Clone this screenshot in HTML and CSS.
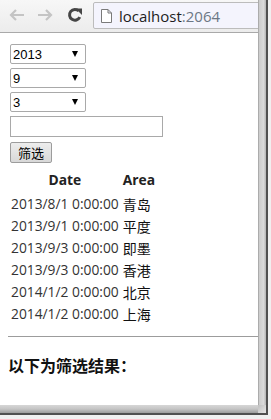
FILE: index.html
```html
<!DOCTYPE html>
<html lang="zh-CN">
<head>
    <meta charset="UTF-8">
    <meta name="viewport" content="width=device-width, initial-scale=1.0">
    <title>筛选</title>
    <link rel="stylesheet" href="styles.css">
</head>
<body>
    <div class="shot">
        <div class="window">
            <div class="toolbar">
                <span class="nav">
                    <svg width="16" height="14" viewBox="0 0 16 14"><path d="M15 7H2M7 2L2 7l5 5" fill="none" stroke="#c4c4c4" stroke-width="2.2"/></svg>
                </span>
                <span class="nav">
                    <svg width="16" height="14" viewBox="0 0 16 14"><path d="M1 7h13M9 2l5 5-5 5" fill="none" stroke="#c4c4c4" stroke-width="2.2"/></svg>
                </span>
                <span class="nav reload">
                    <svg width="16" height="16" viewBox="0 0 16 16"><path d="M12.8 10.2A5.4 5.4 0 1 1 11.8 4" fill="none" stroke="#454545" stroke-width="3"/><path d="M8.6 1.6h6.4v6.4z" fill="#454545"/></svg>
                </span>
                <div class="omnibox">
                    <svg class="page-icon" width="11" height="14" viewBox="0 0 11 14"><path d="M0.5 0.5h6.5l3.5 3.5v9.5h-10z M7 0.5v3.5h3.5" fill="#fff" stroke="#7a7a7a"/></svg>
                    <span class="host">localhost</span><span class="port">:2064</span>
                </div>
            </div>
            <div class="page">
                <form class="filter">
                    <div class="pick"><span>2013</span><i class="caret"></i></div>
                    <div class="pick"><span>9</span><i class="caret"></i></div>
                    <div class="pick"><span>3</span><i class="caret"></i></div>
                    <input type="text" class="keyword">
                    <button type="button" class="go">筛选</button>
                </form>
                <table class="grid">
                    <tr><th>Date</th><th>Area</th></tr>
                    <tr><td>2013/8/1 0:00:00</td><td class="area">青岛</td></tr>
                    <tr><td>2013/9/1 0:00:00</td><td class="area">平度</td></tr>
                    <tr><td>2013/9/3 0:00:00</td><td class="area">即墨</td></tr>
                    <tr><td>2013/9/3 0:00:00</td><td class="area">香港</td></tr>
                    <tr><td>2014/1/2 0:00:00</td><td class="area">北京</td></tr>
                    <tr><td>2014/1/2 0:00:00</td><td class="area">上海</td></tr>
                </table>
                <hr class="rule">
                <h4 class="result-title">以下为筛选结果：</h4>
            </div>
        </div>
        <div class="shade-r"></div>
        <div class="edge-r"></div>
        <div class="shade-b"></div>
        <div class="shade-c"></div>
        <div class="edge-b"></div>
    </div>
</body>
</html>
```

FILE: styles.css
```css
body {
    margin: 0;
    width: 271px;
    height: 419px;
    overflow: hidden;
    background: #f0f0f0;
    font-family: "Open Sans", "Noto Sans CJK SC", sans-serif;
}
.shot {
    display: grid;
    grid-template-columns: 258px 8px 2px 3px;
    grid-template-rows: 405px 8px 2px 4px;
}
.window {
    grid-row: 1;
    grid-column: 1;
    background: #fff;
    overflow: hidden;
    display: flex;
    flex-direction: column;
}
.shade-r {
    grid-row: 1;
    grid-column: 2;
    background: linear-gradient(to right, #9a9a9a 0, #cdcdcd 18%, #dadada 70%, #b4b4b4 100%);
}
.edge-r {
    grid-row: 1 / 3;
    grid-column: 3;
    background: #505050;
}
.shade-b {
    grid-row: 2;
    grid-column: 1;
    background: linear-gradient(to bottom, #d6d6d6 0, #c4c4c4 50%, #9c9c9c 100%);
}
.shade-c {
    grid-row: 2;
    grid-column: 2;
    background: linear-gradient(135deg, #c0c0c0, #e6e6e6);
}
.edge-b {
    grid-row: 3;
    grid-column: 1 / 4;
    background: #505050;
}
.toolbar {
    height: 32px;
    border-bottom: 1px solid #a9a9a9;
    background: linear-gradient(#f7f7f7, #ececec);
    display: flex;
    align-items: flex-start;
    padding-left: 9px;
}
.nav {
    display: flex;
    width: 16px;
    height: 16px;
    margin-top: 7px;
    margin-right: 12px;
    align-items: center;
}
.nav.reload {
    margin-left: 2px;
    margin-right: 10px;
}
.omnibox {
    flex: 1;
    margin-top: 2px;
    margin-right: -20px;
    height: 25px;
    border: 1px solid #bcbcbc;
    border-radius: 2px;
    background: #f4f4fd;
    display: flex;
    align-items: center;
    font-family: "Open Sans", sans-serif;
    font-size: 15px;
}
.page-icon {
    margin-left: 7px;
    margin-right: 7px;
}
.host {
    color: #1d1d1d;
}
.port {
    color: #6c7784;
}
.page {
    padding: 11px 8px 0;
}
.filter {
    display: flex;
    flex-direction: column;
    align-items: flex-start;
    gap: 4px;
    margin: 0 0 0 2px;
}
.pick {
    box-sizing: border-box;
    width: 76px;
    height: 20px;
    border: 1px solid #a9a9a9;
    border-radius: 2px;
    display: flex;
    align-items: center;
    justify-content: space-between;
    padding: 0 7px 0 2px;
    font-family: "Liberation Sans", Arial, sans-serif;
    font-size: 13px;
    color: #000;
}
.caret {
    width: 0;
    height: 0;
    border-left: 3px solid transparent;
    border-right: 3px solid transparent;
    border-top: 6px solid #000;
}
.keyword {
    box-sizing: border-box;
    width: 153px;
    height: 21px;
    margin: 0;
    border: 1px solid #a9a9a9;
    padding: 0 2px;
}
.go {
    box-sizing: border-box;
    height: 21px;
    width: 42px;
    margin-top: 1px;
    padding: 0;
    border: 1px solid #9c9c9c;
    border-radius: 2px;
    background: linear-gradient(#ededed, #d8d8d8);
    font-family: "Noto Sans CJK SC", sans-serif;
    font-size: 13px;
    color: #000;
}
.grid {
    margin-top: 4px;
    border-spacing: 2px;
    font-size: 13.8px;
    color: #333;
}
.grid th {
    padding: 1px;
    line-height: 20px;
    font-weight: bold;
    color: #222;
}
.grid td {
    padding: 1px;
    line-height: 18px;
    white-space: nowrap;
}
.grid tr:nth-child(2) td {
    padding-top: 2px;
}
.grid .area {
    color: #111;
    font-family: "Noto Sans CJK SC", sans-serif;
    font-size: 14px;
}
.rule {
    margin: 10px -30px 0 0;
    border: 0;
    border-top: 1px solid #9c9c9c;
}
.result-title {
    margin: 16px 0 0;
    font-family: "Noto Sans CJK SC", sans-serif;
    font-size: 16px;
    font-weight: bold;
    color: #111;
}
```
